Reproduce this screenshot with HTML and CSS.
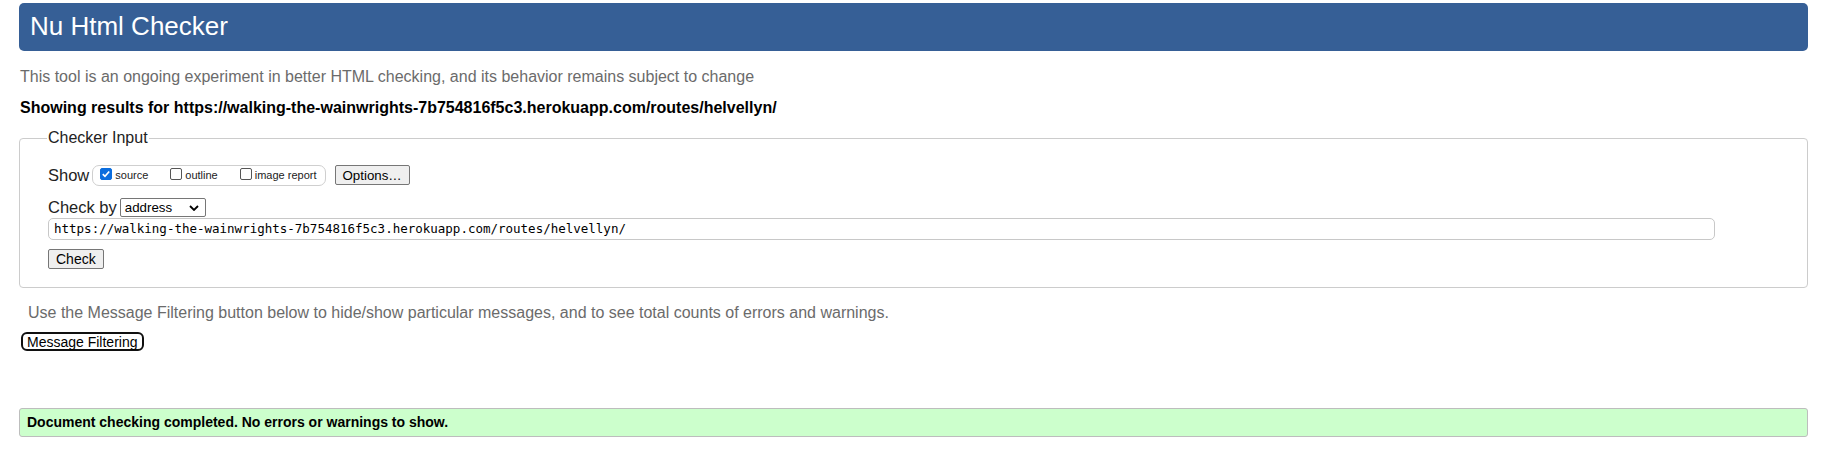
FILE: index.html
```html
<!DOCTYPE html>
<html lang="en">
<head>
<meta charset="utf-8">
<title>Nu Html Checker</title>
<link rel="stylesheet" href="styles.css">
</head>
<body>
<h1 class="header">Nu Html Checker</h1>
<p class="intro">This tool is an ongoing experiment in better HTML checking, and its behavior remains subject to change</p>
<p class="showing">Showing results for https://walking-the-wainwrights-7b754816f5c3.herokuapp.com/routes/helvellyn/</p>
<fieldset class="checker">
  <legend class="legend">Checker Input</legend>
  <div class="row row-show">
    <span class="label">Show</span>
    <span class="group">
      <label class="opt"><span class="box checked"><svg viewBox="0 0 13 13" width="13" height="13"><path d="M3 6.6 L5.4 9 L10 3.8" fill="none" stroke="#fff" stroke-width="1.8"/></svg></span>source</label>
      <label class="opt"><span class="box"></span>outline</label>
      <label class="opt"><span class="box"></span>image report</label>
    </span>
    <span class="btn btn-options">Options…</span>
  </div>
  <div class="row row-by">
    <span class="label">Check by</span>
    <span class="select">address<svg viewBox="0 0 10 6" width="10" height="6"><path d="M1 1 L5 5 L9 1" fill="none" stroke="#000" stroke-width="1.8"/></svg></span>
  </div>
  <div class="url">https://walking-the-wainwrights-7b754816f5c3.herokuapp.com/routes/helvellyn/</div>
  <div class="row row-check"><span class="btn btn-check">Check</span></div>
</fieldset>
<p class="filter-note">Use the Message Filtering button below to hide/show particular messages, and to see total counts of errors and warnings.</p>
<div class="filter-row"><span class="filter-btn">Message Filtering</span></div>
<div class="success">Document checking completed. No errors or warnings to show.</div>
</body>
</html>
```
FILE: styles.css
```css
html, body {
  margin: 0;
  background: #fff;
}
body {
  padding: 3px 26px 0 19px;
  font-family: "Liberation Sans", Arial, sans-serif;
  color: #000;
}
.header {
  margin: 0;
  height: 48px;
  line-height: 47px;
  padding-left: 11px;
  background: #365f96;
  color: #fff;
  font-weight: normal;
  font-size: 26px;
  border-radius: 5px;
}
.intro {
  margin: 17px 0 0 1px;
  font-size: 16px;
  line-height: 18px;
  color: #6b6b6b;
}
.showing {
  margin: 13px 0 0 1px;
  font-size: 16px;
  line-height: 18px;
  font-weight: bold;
}
.checker {
  margin: 12px 0 0 0;
  padding: 0 0 18px 28px;
  border: 1px solid #cccccc;
  border-radius: 4px;
}
.legend {
  padding: 0 1px;
  margin-left: -1px;
  font-size: 16px;
  line-height: 18px;
  color: #222;
}
.row {
  display: flex;
  align-items: center;
}
.row-show {
  margin-top: 17px;
  height: 22px;
}
.label {
  font-size: 16.5px;
  color: #222;
}
.group {
  display: flex;
  align-items: center;
  margin-left: 3px;
  height: 19px;
  padding: 0 8px 0 7px;
  border: 1px solid #cfcfcf;
  border-radius: 7px;
  white-space: nowrap;
}
.opt {
  display: flex;
  align-items: center;
  font-size: 11px;
  color: #222;
  margin-right: 22px;
  white-space: nowrap;
}
.opt:last-child { margin-right: 0; }
.box {
  display: inline-flex;
  width: 12px;
  height: 12px;
  border: 1px solid #555;
  border-radius: 2px;
  margin-right: 3px;
  margin-top: -3px;
  box-sizing: border-box;
  background: #fff;
}
.box.checked {
  background: #0b6dde;
  border-color: #0b6dde;
  width: 12px;
  height: 12px;
}
.box.checked svg { width: 12px; height: 12px; margin: -1px; }
.btn {
  display: inline-flex;
  align-items: center;
  height: 20px;
  box-sizing: border-box;
  padding: 0 6px;
  border: 1px solid #767676;
  border-radius: 2px;
  background: #efefef;
  font-size: 13.3px;
  color: #000;
}
.btn-options {
  margin-left: 9px;
  padding: 0 7px;
}
.btn-check {
  padding: 0 7px;
  font-size: 14px;
}
.row-by {
  margin-top: 11px;
  height: 21px;
}
.select {
  display: inline-flex;
  align-items: center;
  justify-content: space-between;
  margin-left: 3px;
  width: 86px;
  height: 19px;
  box-sizing: border-box;
  padding: 0 6px 0 4px;
  border: 1px solid #767676;
  border-radius: 2px;
  font-size: 13.3px;
}
.url {
  margin-top: 0;
  margin-right: 92px;
  height: 22px;
  line-height: 20px;
  box-sizing: border-box;
  padding-left: 5px;
  border: 1px solid #c8c8c8;
  border-radius: 5px;
  font-family: "DejaVu Sans Mono", "Liberation Mono", monospace;
  font-size: 12.5px;
  color: #000;
}
.row-check {
  margin-top: 9px;
}
.filter-note {
  margin: 16px 0 0 9px;
  font-size: 16px;
  line-height: 18px;
  color: #6b6b6b;
}
.filter-row {
  margin-top: 10px;
  margin-left: 2px;
  display: flex;
}
.filter-btn {
  display: inline-flex;
  align-items: center;
  height: 19px;
  box-sizing: border-box;
  padding: 0 4px;
  border: 2px solid #101010;
  border-radius: 6px;
  font-size: 14px;
}
.success {
  margin-top: 57px;
  height: 29px;
  line-height: 27px;
  box-sizing: border-box;
  padding-left: 7px;
  background: #ccffcc;
  border: 1px solid #bdbdbd;
  border-radius: 3px;
  font-size: 14px;
  font-weight: bold;
}
```
